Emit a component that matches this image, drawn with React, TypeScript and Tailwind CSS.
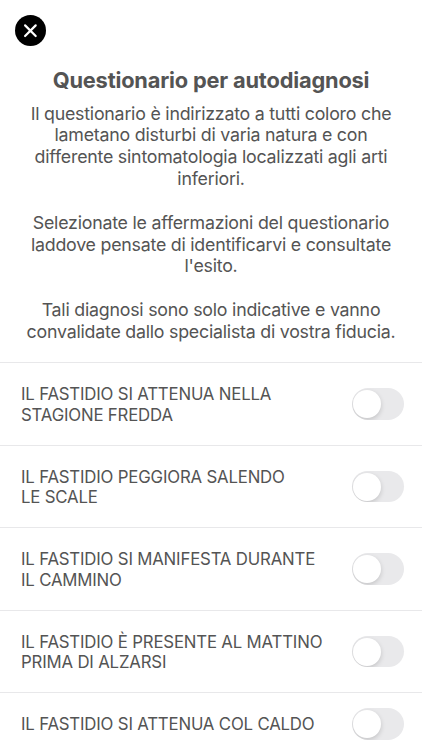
const questions = [
  ["IL FASTIDIO SI ATTENUA NELLA", "STAGIONE FREDDA"],
  ["IL FASTIDIO PEGGIORA SALENDO", "LE SCALE"],
  ["IL FASTIDIO SI MANIFESTA DURANTE", "IL CAMMINO"],
  ["IL FASTIDIO È PRESENTE AL MATTINO", "PRIMA DI ALZARSI"],
  ["IL FASTIDIO SI ATTENUA COL CALDO"],
];

const intro = [
  [
    "Il questionario è indirizzato a tutti coloro che",
    "lametano disturbi di varia natura e con",
    "differente sintomatologia localizzati agli arti",
    "inferiori.",
  ],
  [
    "Selezionate le affermazioni del questionario",
    "laddove pensate di identificarvi e consultate",
    "l'esito.",
  ],
  [
    "Tali diagnosi sono solo indicative e vanno",
    "convalidate dallo specialista di vostra fiducia.",
  ],
];

function Lines({ lines }: { lines: string[] }) {
  return (
    <>
      {lines.map((line) => (
        <span key={line} className="block whitespace-nowrap">
          {line}
        </span>
      ))}
    </>
  );
}

function Toggle({ label }: { label: string }) {
  return (
    <button
      role="switch"
      aria-checked={false}
      aria-label={label}
      className="flex h-[31.5px] w-[52px] shrink-0 items-center overflow-hidden rounded-full bg-[#e9e9eb] pl-[1.5px]"
    >
      <span className="size-7 rounded-full bg-white shadow-[0_2px_5px_rgba(0,0,0,0.16)]" />
    </button>
  );
}

export default function App() {
  return (
    <div className="h-[750px] overflow-hidden bg-white font-['Inter',sans-serif] text-[#545454]">
      <header className="h-[69px] pt-[15px] pl-[15.4px]">
        <button
          aria-label="Chiudi"
          className="flex size-[31px] items-center justify-center rounded-full bg-black"
        >
          <svg viewBox="0 0 31 31" className="size-full" stroke="white" strokeWidth="2.2" strokeLinecap="round">
            <path d="M10.1 10.4l10.6 10.6M20.7 10.4L10.1 21" />
          </svg>
        </button>
      </header>
      <section className="flex h-[293.4px] flex-col items-center text-center">
        <h1 className="text-[21.8px] leading-[23px] font-bold tracking-[-0.18px] whitespace-nowrap">
          Questionario per autodiagnosi
        </h1>
        <div className="mt-[10.6px] flex flex-col gap-[21.8px] text-[17.8px] leading-[21.85px] tracking-[-0.23px]">
          {intro.map((lines) => (
            <p key={lines[0]}>
              <Lines lines={lines} />
            </p>
          ))}
        </div>
      </section>
      <ul>
        {questions.map((lines) => (
          <li
            key={lines[0]}
            className="flex items-center justify-between border-t border-[#e8e8ea] pr-[18.5px] pl-[21px] text-[16.8px] leading-[20.3px] tracking-[-0.18px]"
          >
            <p className="pt-[21.1px] pb-[19.8px]">
              <Lines lines={lines} />
            </p>
            <Toggle label={lines.join(" ")} />
          </li>
        ))}
      </ul>
    </div>
  );
}
